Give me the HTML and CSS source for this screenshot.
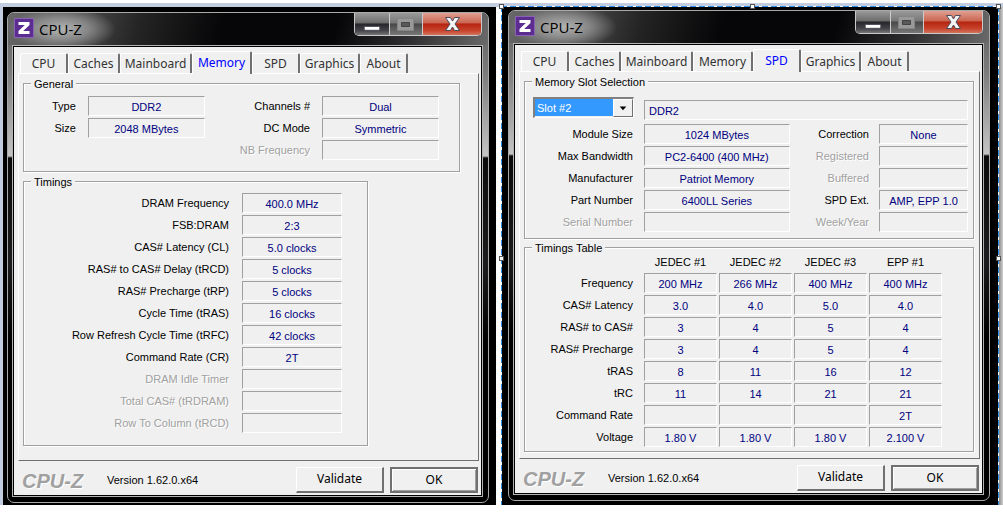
FILE: index.html
```html
<!DOCTYPE html>
<html lang="en">
<head>
<meta charset="utf-8">
<title>CPU-Z</title>
<link rel="stylesheet" href="styles.css">
</head>
<body>
<main class="desk">
<section class="shot shot-left">
<article class="window">
<header class="titlebar">
<svg class="app-icon" viewBox="0 0 20 20"><rect x=".5" y=".5" width="19" height="19" fill="#5c2d91" stroke="#8a62b4"/><path d="M4.500 4h11v3L9.200 13h6.300v3h-11v-3l6.300-6H4.500z" fill="#fff"/></svg>
<h1>CPU-Z</h1>
<div class="controls">
<button class="ctl min" aria-label="Minimize"><svg viewBox="0 0 35 22"><rect x="9.500" y="13.500" width="16" height="4" rx="1" fill="#fff" stroke="#4a4a58"/></svg></button>
<button class="ctl max" aria-label="Maximize" disabled><svg viewBox="0 0 32 22"><path d="M7.500 5.500h16v12h-16z" fill="#999" stroke="#858585"/><path d="M11.500 9.500h8v4h-8z" fill="#5a5a5a" stroke="#444"/></svg></button>
<button class="ctl close" aria-label="Close"><svg viewBox="0 0 58 22"><path d="M22.500 4.500h5l2 3.500 2-3.500h5l-4.500 6.500 4.500 6.500h-5l-2-3.500-2 3.500h-5l4.500-6.500z" fill="#f4f4f4" stroke="#4b4b5c"/></svg></button>
</div>
</header>
<div class="client">
<nav class="tabs">
<button class="tab t48">CPU</button><button class="tab t52">Caches</button><button class="tab t72">Mainboard</button><button class="tab t60 active">Memory</button><button class="tab t48">SPD</button><button class="tab t60">Graphics</button><button class="tab t48">About</button>
</nav>
<div class="page">
<fieldset class="group general">
<legend>General</legend>
<div class="rows">
<label for="a1">Type</label><input id="a1" readonly value="DDR2">
<label for="a2">Size</label><input id="a2" readonly value="2048 MBytes">
</div>
<div class="rows">
<label for="a3">Channels #</label><input id="a3" readonly value="Dual">
<label for="a4">DC Mode</label><input id="a4" readonly value="Symmetric">
<label for="a5" class="off">NB Frequency</label><input id="a5" readonly>
</div>
</fieldset>
<fieldset class="group timings">
<legend>Timings</legend>
<div class="rows">
<label for="b1">DRAM Frequency</label><input id="b1" readonly value="400.0 MHz">
<label for="b2">FSB:DRAM</label><input id="b2" readonly value="2:3">
<label for="b3">CAS# Latency (CL)</label><input id="b3" readonly value="5.0 clocks">
<label for="b4">RAS# to CAS# Delay (tRCD)</label><input id="b4" readonly value="5 clocks">
<label for="b5">RAS# Precharge (tRP)</label><input id="b5" readonly value="5 clocks">
<label for="b6">Cycle Time (tRAS)</label><input id="b6" readonly value="16 clocks">
<label for="b7">Row Refresh Cycle Time (tRFC)</label><input id="b7" readonly value="42 clocks">
<label for="b8">Command Rate (CR)</label><input id="b8" readonly value="2T">
<label for="b9" class="off">DRAM Idle Timer</label><input id="b9" readonly>
<label for="b10" class="off">Total CAS# (tRDRAM)</label><input id="b10" readonly>
<label for="b11" class="off">Row To Column (tRCD)</label><input id="b11" readonly>
</div>
</fieldset>
</div>
<footer class="foot"><strong>CPU-Z</strong><span>Version 1.62.0.x64</span><button class="btn">Validate</button><button class="btn default">OK</button></footer>
</div>
</article>
</section>
<section class="shot shot-right">
<i class="handle tl"></i><i class="handle tc"></i><i class="handle tr"></i><i class="handle ml"></i><i class="handle mr"></i>
<article class="window">
<header class="titlebar">
<svg class="app-icon" viewBox="0 0 20 20"><rect x=".5" y=".5" width="19" height="19" fill="#5c2d91" stroke="#8a62b4"/><path d="M4.500 4h11v3L9.200 13h6.300v3h-11v-3l6.300-6H4.500z" fill="#fff"/></svg>
<h1>CPU-Z</h1>
<div class="controls">
<button class="ctl min" aria-label="Minimize"><svg viewBox="0 0 35 22"><rect x="9.500" y="13.500" width="16" height="4" rx="1" fill="#fff" stroke="#4a4a58"/></svg></button>
<button class="ctl max" aria-label="Maximize" disabled><svg viewBox="0 0 32 22"><path d="M7.500 5.500h16v12h-16z" fill="#999" stroke="#858585"/><path d="M11.500 9.500h8v4h-8z" fill="#5a5a5a" stroke="#444"/></svg></button>
<button class="ctl close" aria-label="Close"><svg viewBox="0 0 58 22"><path d="M22.500 4.500h5l2 3.500 2-3.500h5l-4.500 6.500 4.500 6.500h-5l-2-3.500-2 3.500h-5l4.500-6.500z" fill="#f4f4f4" stroke="#4b4b5c"/></svg></button>
</div>
</header>
<div class="client">
<nav class="tabs">
<button class="tab t48">CPU</button><button class="tab t52">Caches</button><button class="tab t72">Mainboard</button><button class="tab t60">Memory</button><button class="tab t48 active">SPD</button><button class="tab t60">Graphics</button><button class="tab t48">About</button>
</nav>
<div class="page">
<fieldset class="group slot">
<legend>Memory Slot Selection</legend>
<div class="pick">
<div class="combo"><select aria-label="Memory slot"><option>Slot #2</option></select><svg viewBox="0 0 19 17"><path d="M6 7h7l-3.500 4z" fill="#000"/></svg></div>
<input aria-label="Memory type" readonly value="DDR2">
</div>
<div class="details">
<div class="rows">
<label for="c1">Module Size</label><input id="c1" readonly value="1024 MBytes">
<label for="c2">Max Bandwidth</label><input id="c2" readonly value="PC2-6400 (400 MHz)">
<label for="c3">Manufacturer</label><input id="c3" readonly value="Patriot Memory">
<label for="c4">Part Number</label><input id="c4" readonly value="6400LL Series">
<label for="c5" class="off">Serial Number</label><input id="c5" readonly>
</div>
<div class="rows">
<label for="d1">Correction</label><input id="d1" readonly value="None">
<label for="d2" class="off">Registered</label><input id="d2" readonly>
<label for="d3" class="off">Buffered</label><input id="d3" readonly>
<label for="d4">SPD Ext.</label><input id="d4" readonly value="AMP, EPP 1.0">
<label for="d5" class="off">Week/Year</label><input id="d5" readonly>
</div>
</div>
</fieldset>
<fieldset class="group table">
<legend>Timings Table</legend>
<table>
<thead><tr><td></td><th scope="col">JEDEC #1</th><th scope="col">JEDEC #2</th><th scope="col">JEDEC #3</th><th scope="col">EPP #1</th></tr></thead>
<tbody>
<tr><th scope="row">Frequency</th><td>200 MHz</td><td>266 MHz</td><td>400 MHz</td><td>400 MHz</td></tr>
<tr><th scope="row">CAS# Latency</th><td>3.0</td><td>4.0</td><td>5.0</td><td>4.0</td></tr>
<tr><th scope="row">RAS# to CAS#</th><td>3</td><td>4</td><td>5</td><td>4</td></tr>
<tr><th scope="row">RAS# Precharge</th><td>3</td><td>4</td><td>5</td><td>4</td></tr>
<tr><th scope="row">tRAS</th><td>8</td><td>11</td><td>16</td><td>12</td></tr>
<tr><th scope="row">tRC</th><td>11</td><td>14</td><td>21</td><td>21</td></tr>
<tr><th scope="row">Command Rate</th><td></td><td></td><td></td><td>2T</td></tr>
<tr><th scope="row">Voltage</th><td>1.80 V</td><td>1.80 V</td><td>1.80 V</td><td>2.100 V</td></tr>
</tbody>
</table>
</fieldset>
</div>
<footer class="foot"><strong>CPU-Z</strong><span>Version 1.62.0.x64</span><button class="btn">Validate</button><button class="btn default">OK</button></footer>
</div>
</article>
</section>
<div class="edge"></div>
</main>
</body>
</html>
```

FILE: styles.css
```css
* { box-sizing: border-box; }
body { margin: 0; background: #fff; font: 11px/14px "Liberation Sans", Arial, sans-serif; color: #000; }
button, input, select { font: inherit; margin: 0; padding: 0; border-radius: 0; }

.desk { display: grid; grid-template-columns: 496fr 503fr 4px; padding-top: 3px; background: linear-gradient(#c3cde0, #c3cde0) 0 3px / 100% 4px no-repeat; }
.shot { position: relative; margin-top: 4px; background: #000; }
.shot-left { margin-left: 3px; padding: 5px 7px 2px 4px; box-shadow: -3px 0 #c3cde0; }
.shot-right { margin-left: 5px; padding: 3px 9px 4px 7px; }
.edge { margin-top: 4px; background: linear-gradient(90deg, #8b8b8b, #d0d0d0); }

.shot-right::before { content: ""; position: absolute; inset: -1px 0 0 0; pointer-events: none; background:
  repeating-linear-gradient(90deg, #2f8fe8 0 6px, #fff 6px 9px) 0 0 / 100% 1px no-repeat,
  repeating-linear-gradient(#2f8fe8 0 6px, #fff 6px 9px) 0 0 / 1px 100% no-repeat,
  repeating-linear-gradient(#2f8fe8 0 6px, #fff 6px 9px) 100% 0 / 1px 100% no-repeat; }
.handle { position: absolute; width: 5px; height: 5px; border: 1px solid #555; background: #fff; z-index: 1; }
.tl { left: -2px; top: -3px; }
.tc { left: 50%; top: -3px; }
.tr { right: -2px; top: -3px; }
.ml { left: -2px; top: 50%; }
.mr { right: -2px; top: 50%; }

/* Window frame */
.window { border: 1px solid #a9a9a9; border-radius: 7px; padding: 0 6px 6px 5px; background:
  linear-gradient(#5c5c5c 0, #7c7c7c 60px, #c4c4c4 143px, #0b0b0b 145px, #1c1c1e 250px, #000 330px, #000 100%); }
.titlebar { display: flex; align-items: flex-start; height: 32px; margin: 0 -6px 1px -5px; padding: 0 6px; border-radius: 6px 6px 0 0; background:
  radial-gradient(ellipse 54px 22px at 54px 16px, rgba(190,190,190,.9) 0, rgba(160,160,160,.7) 50%, transparent 100%),
  linear-gradient(105deg, #686868 0, #444 80px, #242424 130px, #060507 210px, #060507 68%, #303032 84%, #6a6a6a 100%); }
.app-icon { width: 20px; height: 20px; margin-top: 5px; }
.titlebar h1 { margin: 4px 0 0 5px; font: 15px/24px "Open Sans", "Noto Sans", sans-serif; color: #000; }
.controls { display: flex; margin-left: auto; border: 1px solid #c9c9c9; border-top: 0; border-radius: 0 0 5px 5px; overflow: hidden; }
.ctl { height: 22px; border: 0; border-right: 1px solid #ccc; background: linear-gradient(#9a9a9a, #6c6c6c 45%, #25252b 50%, #44444a 80%, #777); }
.ctl svg { display: block; width: 100%; height: 22px; }
.min { width: 35px; }
.max { width: 33px; background: linear-gradient(#9a9a9a, #777 45%, #484848 50%, #777); }
.close { width: 58px; border-right: 0; background: linear-gradient(#e0a092, #cb6550 45%, #b52410 50%, #c8432b 80%, #d2745e); }

/* Tabs */
.client { border: 1px solid #000; outline: 1px solid #b4b4b4; background: #f0f0f0; padding: 4px 2px 2px 4px; }
.tabs { display: flex; align-items: flex-end; height: 22px; padding-left: 2px; }
.tab { height: 20px; border: 0; border-top: 1px solid #fff; border-left: 1px solid #fff; border-right: 2px solid #707070; border-radius: 2px 2px 0 0; background: #f0f0f0; color: #333; font: 12px/18px "Noto Sans", sans-serif; text-align: center; white-space: nowrap; }
.tab.active { position: relative; z-index: 1; height: 23px; margin-bottom: -1px; color: #00f; }
.t48 { width: 48px; }
.t52 { width: 52px; }
.t60 { width: 60px; }
.t72 { width: 72px; }
.page { min-height: 388px; border: 1px solid #fff; border-right-color: #707070; border-bottom-color: #707070; padding: 3px 4px; }

/* Group boxes */
.group { position: relative; margin: 0; border: 0; padding: 0; min-width: 0; }
.group::before { content: ""; position: absolute; inset: -8px 0 0 0; border: 1px solid #a0a0a0; box-shadow: 1px 1px #fff, inset 1px 1px #fff; pointer-events: none; }
.group legend { position: relative; z-index: 1; margin-left: 8px; padding: 0 3px; background: #f0f0f0; line-height: 14px; }
.rows { position: relative; display: grid; grid-auto-rows: 20px; row-gap: 2px; align-content: start; align-items: center; }
.rows label { text-align: right; padding-bottom: 1px; }
.off { color: #a0a0a0; text-shadow: 1px 1px #fff; }
input, tbody td { min-width: 0; width: 100%; height: 20px; border: 1px solid #a0a0a0; border-right-color: #fff; border-bottom-color: #fff; background: #f0f0f0; color: #000080; text-align: center; outline: 0; }
input { padding-top: 1px; }

.general { display: grid; grid-template-columns: 181fr 233fr; padding: 0 21px 0 0; margin-right: 14px; height: 95px; }
.general .rows { grid-template-columns: 1fr 117px; column-gap: 12px; padding-top: 5px; }
.timings { width: 345px; max-width: 100%; height: 271px; margin-top: 3px; }
.timings .rows { grid-template-columns: 1fr 100px; column-gap: 13px; padding: 4px 26px 0 0; }

.slot { height: 164px; margin-right: 1px; }
.pick { position: relative; display: grid; grid-template-columns: 101px 1fr; column-gap: 10px; padding: 8px 6px 4px 9px; }
.pick input { margin-top: 3px; text-align: left; padding-left: 4px; }
.combo { position: relative; height: 21px; border: 2px solid #808080; border-right: 1px solid #fff; border-bottom: 1px solid #fff; }
.combo select { appearance: none; display: block; width: 78px; height: 17px; border: 0; background: #3399ff; color: #fff; padding: 0 0 0 2px; }
.combo svg { position: absolute; right: 0; top: 0; width: 20px; height: 18px; background: #f0f0f0; border: 1px solid #fff; border-right-color: #707070; border-bottom-color: #707070; pointer-events: none; }
.details { display: grid; grid-template-columns: 265fr 178fr; padding-right: 6px; }
.details .rows { grid-template-columns: 109px 1fr; column-gap: 11px; }
.details .rows + .rows { grid-template-columns: 1fr 89px; column-gap: 10px; }

.table { height: 211px; margin: 2px 1px 0 0; }
.table table { position: relative; width: 420px; table-layout: fixed; border-collapse: separate; border-spacing: 2px; margin-top: -5px; }
.table th { font-weight: normal; padding: 0; }
.table thead td { width: 116px; padding: 0; }
.table thead th { height: 19px; }
.table tbody th { text-align: right; padding: 0 9px 1px 0; }
.table tbody td { padding: 1px 0 0; line-height: 14px; }

/* Footer */
.foot { display: flex; align-items: center; gap: 6px; padding: 5px 1px 0 4px; }
.foot strong { width: 79px; font-size: 20px; line-height: 24px; font-style: italic; color: #a0a0a0; text-shadow: 1px 1px #fff; padding-top: 3px; }
.foot span { flex: 1; }
.btn { width: 88px; height: 26px; border: 1px solid #fff; border-right: 2px solid #707070; border-bottom: 2px solid #707070; background: #f0f0f0; font: 12px/20px "Noto Sans", sans-serif; color: #000; }
.default { border: 2px solid #707070; box-shadow: inset 1px 1px #fff, inset -1px -1px #a0a0a0; }
```
